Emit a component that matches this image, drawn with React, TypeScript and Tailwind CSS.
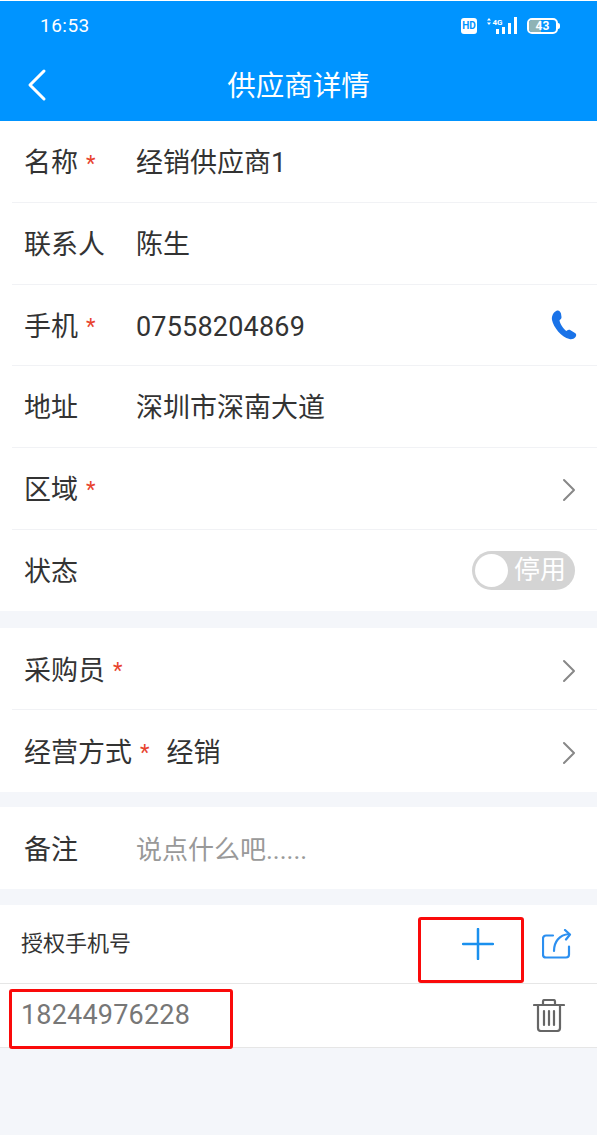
import type { ReactNode } from 'react';
import { ChevronLeft, ChevronRight } from 'lucide-react';

function Row({ label, required, value, muted, right, last }: {
  label: string;
  required?: boolean;
  value?: ReactNode;
  muted?: boolean;
  right?: ReactNode;
  last?: boolean;
}) {
  return (
    <div className={`h-[81.7px] ml-3 pl-3 pr-[22px] pt-[4px] flex items-center ${last ? '' : 'border-b border-[#f1f2f5]'}`}>
      <div className="min-w-[112px] pr-[17px] flex items-center shrink-0">
        <span className="text-[27px] text-[#333]">{label}</span>
        {required && <span className="ml-[8px] text-[22px] leading-none text-[#e8432e]">*</span>}
      </div>
      {value && <span className={muted ? 'text-[26px] text-[#999]' : 'text-[27px] text-[#333]'}>{value}</span>}
      <div className="ml-auto flex items-center">{right}</div>
    </div>
  );
}

const chevron = <ChevronRight size={40} strokeWidth={1.2} className="text-[#888] -mr-[14px]" />;

function StatusIcons() {
  return (
    <div className="flex items-center">
      <span className="w-[16px] h-[16px] bg-white text-[#0094ff] rounded-[3px] text-[10px] font-bold leading-none flex items-center justify-center">HD</span>
      <svg width="32" height="18" viewBox="0 0 32 18" fill="white" className="ml-[10px]">
        {/* up/down arrows */}
        <path d="M2 1l2 2.500H0zM2 8L0 5.500h4z" />
        <text x="5.500" y="7.500" fontSize="8" fontWeight="700" fontFamily="Roboto">4G</text>
        <rect x="9" y="12" width="3" height="5" />
        <rect x="15" y="10" width="3" height="7" />
        <rect x="21" y="6" width="3" height="11" />
        <rect x="27" y="0" width="3" height="17" />
      </svg>
      <div className="ml-[8px] flex items-center">
        <div className="w-[31px] h-[16px] rounded-[5px] border-2 border-white relative overflow-hidden flex items-center justify-center">
          <span className="absolute left-0 top-0 bottom-0 w-[12px] bg-[#8fb3b5]" />
          <span className="relative text-[12px] font-bold leading-none">43</span>
        </div>
        <span className="w-[2px] h-[6px] bg-white rounded-r-sm" />
      </div>
    </div>
  );
}

export default function App() {
  return (
    <div className="w-[600px] h-[1136px] bg-white overflow-hidden pt-[1px] font-['Roboto','Noto_Sans_CJK_SC',sans-serif]">
      <div className="w-[597px] h-[1134px] bg-[#f4f6fa]">
        {/* top bar */}
        <header className="h-[120.3px] bg-[#0094ff] text-white">
          <div className="h-[50px] pl-[40px] pr-[37px] flex items-center justify-between">
            <span className="text-[19px] tracking-wide">16:53</span>
            <StatusIcons />
          </div>
          <div className="h-[70px] relative flex items-center justify-center">
            <ChevronLeft size={56} strokeWidth={1.3} className="absolute left-[9px] top-[6px]" />
            <span className="text-[28.500px] mt-[2px]">供应商详情</span>
          </div>
        </header>

        <section className="bg-white">
          <Row label="名称" required value="经销供应商1" />
          <Row label="联系人" value="陈生" />
          <Row label="手机" required value={<span className="tracking-[0.2px]">07558204869</span>} right={
            <svg width="26" height="30" viewBox="0 0 26 30" fill="#1a73e8" className="-mr-[2px] -mt-[4px]">
              <path d="M6 .5C8 0 9.500 1.500 10 3.500L10.500 7C10.700 8.500 9.500 9.500 8.500 10.200C9 14 12.500 19 15.500 21C16.800 20 18 19.500 19.500 20.200L24 23C25.500 24 25.500 25.500 24.500 27C23 29 20.500 29.500 18.500 29C10 27 2.500 17 1 10C.3 6 2.500 2 6 .5Z" />
            </svg>
          } />
          <Row label="地址" value="深圳市深南大道" />
          <Row label="区域" required right={chevron} />
          <Row label="状态" last right={
            <div className="w-[103px] h-[39px] -mt-[4px] rounded-full bg-[#d4d4d4] flex items-center justify-between pl-[3px] pr-[9px]">
              <span className="w-[33px] h-[33px] rounded-full bg-white" />
              <span className="text-[26px] text-white">停用</span>
            </div>
          } />
        </section>

        <section className="bg-white mt-[17px]">
          <Row label="采购员" required right={chevron} />
          <Row label="经营方式" required value="经销" last right={chevron} />
        </section>

        <section className="bg-white mt-[15.500px]">
          <Row label="备注" value="说点什么吧......" muted last />
        </section>

        <section className="bg-white mt-[16px]">
          <div className="h-[79px] pl-[21px] pr-[25px] flex items-center border-b border-[#e6e6e6] relative">
            <span className="text-[22px] text-[#333]">授权手机号</span>
            <div className="ml-auto flex items-center gap-[48px]">
              <svg width="32" height="32" viewBox="0 0 32 32" stroke="#1a90ee" strokeWidth="2.500" strokeLinecap="round">
                <path d="M16 1v30M1 16h30" />
              </svg>
              <svg width="30" height="30" viewBox="0 0 30 30" fill="none" stroke="#2b8ff0" strokeWidth="2.200" strokeLinecap="round" strokeLinejoin="round">
                <path d="M11 6.500H4a3 3 0 0 0-3 3v16a3 3 0 0 0 3 3h20a3 3 0 0 0 3-3v-8" />
                <path d="M12 22c0-9 5-16 15-17" />
                <path d="M23 1l5 4.500-4 5" />
              </svg>
            </div>
            <div className="absolute left-[418px] top-[12px] w-[106px] h-[66px] border-[3px] border-[#fa0a0a] rounded-[3px]" />
          </div>
          <div className="h-[64px] pl-[21px] pr-[32px] flex items-center border-b border-[#e6e6e6] relative">
            <span className="text-[27px] text-[#777] tracking-[0.2px]">18244976228</span>
            <svg width="32" height="33" viewBox="0 0 32 33" fill="none" stroke="#666" strokeWidth="2.200" strokeLinecap="round" strokeLinejoin="round" className="ml-auto">
              <path d="M1 6h30" />
              <path d="M10 6V2.500A1.500 1.500 0 0 1 11.500 1h9A1.500 1.500 0 0 1 22 2.500V6" />
              <path d="M5 6v23a3 3 0 0 0 3 3h16a3 3 0 0 0 3-3V6" />
              <path d="M11 12v14M16 12v14M21 12v14" />
            </svg>
            <div className="absolute left-[9px] top-[5px] w-[224px] h-[60px] border-[3px] border-[#fa0a0a] rounded-[3px]" />
          </div>
        </section>
      </div>
    </div>
  );
}
